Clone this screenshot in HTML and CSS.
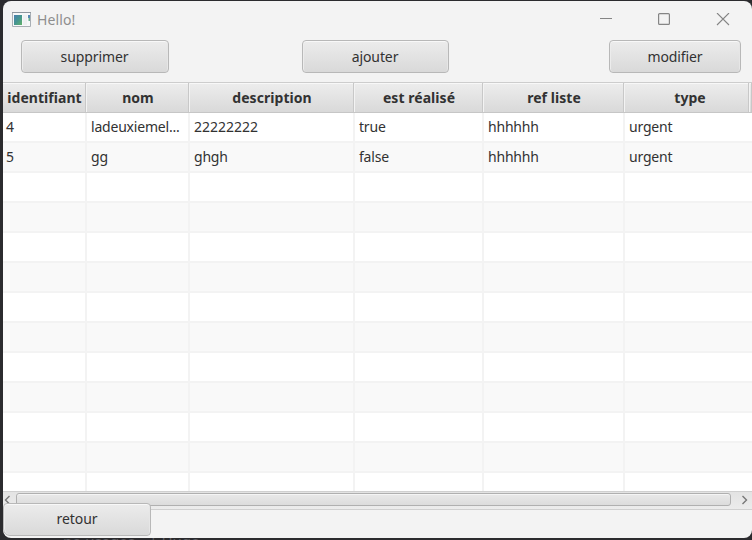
FILE: index.html
```html
<!DOCTYPE html>
<html lang="fr">
<head>
<meta charset="utf-8">
<title>Hello!</title>
<link rel="stylesheet" href="styles.css">
</head>
<body>
<main class="window">
  <header class="titlebar">
    <svg class="app-icon" width="20" height="16" viewBox="0 0 20 16">
      <defs><linearGradient id="g" x1="0" y1="0" x2="1" y2="1"><stop offset="0" stop-color="#4a7fb0"/><stop offset=".5" stop-color="#459590"/><stop offset="1" stop-color="#62b268"/></linearGradient></defs>
      <path fill="#f7f8f9" stroke="#a9afb5" d="M.5.5h18v14H.5z"/>
      <path stroke="#8e969e" d="M0 .5h19"/>
      <path fill="url(#g)" d="M2 3h8v10H2z"/>
      <path fill="#eef0f1" d="M11 3h4v10h-4z"/>
      <path fill="#5689b4" d="M16 3h2v3h-2z"/><path fill="#69ae8c" d="M16.500 6h1.500v3h-1.500z"/>
    </svg>
    <span class="title">Hello!</span>
    <svg class="controls" width="130" height="14" viewBox="0 0 130 14" fill="none" stroke="#858585">
      <path d="M0 5.500h12"/>
      <rect x="58.600" y="0.600" width="10.800" height="10.800" rx="1" stroke-width="1.200"/>
      <path stroke-width="1.100" d="M117 0l12 12M129 0l-12 12"/>
    </svg>
  </header>
  <nav class="toolbar">
    <button class="btn delete">supprimer</button>
    <button class="btn add">ajouter</button>
    <button class="btn edit">modifier</button>
  </nav>
  <section class="table">
    <div class="row head"><div>identifiant</div><div>nom</div><div>description</div><div>est réalisé</div><div>ref liste</div><div class="type">type</div><div></div></div>
    <div class="row"><div>4</div><div>ladeuxiemel...</div><div class="digits">22222222</div><div>true</div><div>hhhhhh</div><div>urgent</div><div></div></div>
    <div class="row"><div>5</div><div>gg</div><div>ghgh</div><div>false</div><div>hhhhhh</div><div>urgent</div><div></div></div>
    <div class="row"><div></div><div></div><div></div><div></div><div></div><div></div><div></div></div>
    <div class="row"><div></div><div></div><div></div><div></div><div></div><div></div><div></div></div>
    <div class="row"><div></div><div></div><div></div><div></div><div></div><div></div><div></div></div>
    <div class="row"><div></div><div></div><div></div><div></div><div></div><div></div><div></div></div>
    <div class="row"><div></div><div></div><div></div><div></div><div></div><div></div><div></div></div>
    <div class="row"><div></div><div></div><div></div><div></div><div></div><div></div><div></div></div>
    <div class="row"><div></div><div></div><div></div><div></div><div></div><div></div><div></div></div>
    <div class="row"><div></div><div></div><div></div><div></div><div></div><div></div><div></div></div>
    <div class="row"><div></div><div></div><div></div><div></div><div></div><div></div><div></div></div>
    <div class="row"><div></div><div></div><div></div><div></div><div></div><div></div><div></div></div>
    <div class="row"><div></div><div></div><div></div><div></div><div></div><div></div><div></div></div>
  </section>
  <div class="scrollbar">
    <svg width="7" height="10" viewBox="0 0 7 10" fill="none" stroke="#777" stroke-width="1.400"><path d="M5.500 1L1.500 5l4 4"/></svg>
    <div class="thumb"></div>
    <svg width="7" height="10" viewBox="0 0 7 10" fill="none" stroke="#777" stroke-width="1.400"><path d="M1.500 1l4 4-4 4"/></svg>
  </div>
  <button class="btn back">retour</button>
</main>
<div class="behind"><span>no usages</span><span>± Hugo</span></div>
</body>
</html>
```

FILE: styles.css
```css
* { box-sizing: border-box; }
body {
  margin: 0;
  padding: 1px 0 0 3px;
  width: 752px;
  height: 540px;
  overflow: hidden;
  background: #2b2b2e;
  font: 14px/20px "Noto Sans", "Open Sans", sans-serif;
  color: #323232;
}
.window {
  display: flex;
  flex-direction: column;
  width: 749px;
  height: 537px;
  overflow: hidden;
  border-radius: 8px;
  background: #f3f3f3;
}
.titlebar {
  display: flex;
  align-items: center;
  height: 37px;
  padding: 0 22px 0 9px;
  color: #8e8e8e;
}
.title { margin-left: 5px; letter-spacing: .1px; }
.controls { margin-left: auto; }
.toolbar {
  display: flex;
  align-items: center;
  height: 44px;
  padding: 0 11px 7px 17.5px;
}
.btn {
  height: 33px;
  padding: 0 0 1px;
  border: 1px solid #b8b8b8;
  border-radius: 4px;
  background: linear-gradient(#ececec, #d9d9d9);
  box-shadow: inset 0 1px #f8f8f8, inset 1px 0 #ececec, inset -1px 0 #e6e6e6;
  font: inherit;
  letter-spacing: -.1px;
  color: #323232;
}
.toolbar .btn { padding-bottom: 0; }
.delete { width: 148px; }
.add { width: 147px; margin-left: 133px; }
.edit { width: 132px; margin-left: auto; }
.back {
  position: relative;
  flex: none;
  width: 148px;
  margin-top: -7px;
  border-bottom-left-radius: 7px;
}
.table {
  flex: none;
  height: 409px;
  overflow: hidden;
  background: #fff;
}
.row {
  display: grid;
  grid-template-columns: 84px 103px 165px 129px 141px 125px 2px;
  height: 30px;
  border-bottom: 2px solid #f3f3f3;
  line-height: 27px;
  letter-spacing: -.2px;
  white-space: nowrap;
}
.digits { letter-spacing: 0; }
.row:nth-child(odd) { background: #f9f9f9; }
.row div { padding-left: 3px; border-right: 2px solid #f3f3f3; }
.row div:nth-child(n+2) { padding-left: 4px; }
.row div:nth-child(n+6) { border-right: 0; }
.row.head {
  height: 31px;
  border-top: 1px solid #cdcdcd;
  border-bottom: 1px solid #c6c6c6;
  background: linear-gradient(#ededed, #d9d9d9);
  box-shadow: inset 0 1px #f8f8f8;
  line-height: 29px;
  letter-spacing: .05px;
  font-weight: bold;
  text-align: center;
}
.row.head div {
  padding: 0;
  border-right: 1px solid #f3f3f3;
  box-shadow: inset -1px 0 #c8c8c8;
}
.row.head .type { padding-left: 6px; }
.row.head div:last-child { border: 0; }
.scrollbar {
  display: flex;
  flex: none;
  align-items: center;
  height: 19px;
  padding: 0 4px 2px 1px;
  border: 1px solid #d0d0d0;
  border-width: 1px 0;
  background: linear-gradient(#e3e3e3, #ececec);
}
.thumb {
  width: 715px;
  height: 13px;
  margin: 0 auto 0 5px;
  border: 1px solid #b0b0b0;
  border-radius: 3px;
  background: linear-gradient(#e9e9e9, #dcdcdc);
  box-shadow: inset 0 1px #f5f5f5;
}
.behind {
  display: flex;
  gap: 14px;
  margin-top: -7px;
  padding-left: 60px;
  position: relative;
  z-index: -1;
  color: #5c5c60;
  font-size: 15px;
}
```
